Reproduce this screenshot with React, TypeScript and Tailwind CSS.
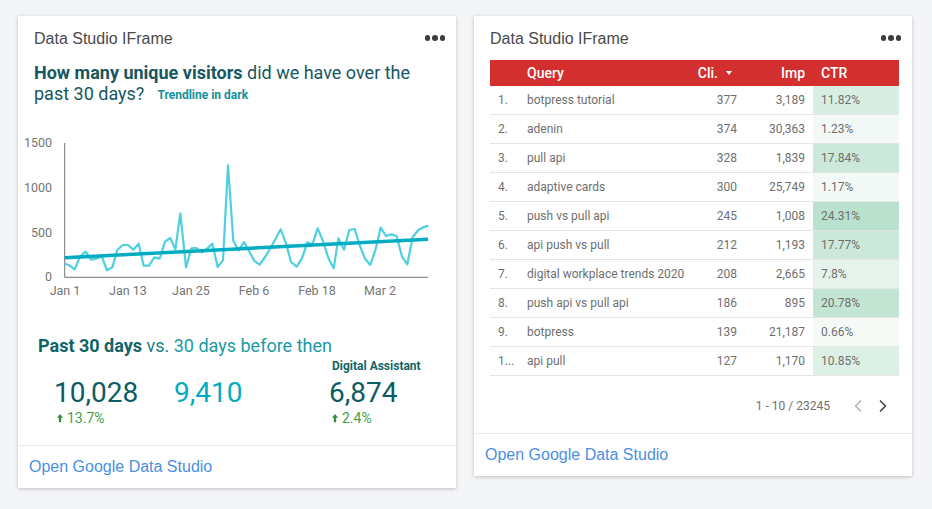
import { ChevronLeft, ChevronRight } from "lucide-react";

const roboto = "font-['Roboto',sans-serif]";

const series = [
  [164, 413], [178, 418], [194, 430], [210, 392], [227, 377], [243, 401], [259, 398], [275, 390], [291, 433], [307, 424],
  [322, 372], [338, 357], [354, 357], [370, 371], [386, 353], [401, 419], [417, 419], [433, 394], [449, 398], [465, 347],
  [481, 336], [496, 371], [511, 262], [528, 424], [544, 367], [560, 366], [576, 379], [592, 367], [607, 353], [623, 423],
  [639, 403], [654, 118], [670, 345], [686, 373], [702, 348], [717, 375], [733, 405], [749, 416], [765, 393], [781, 367],
  [797, 338], [812, 310], [828, 352], [843, 408], [860, 422], [876, 397], [892, 349], [907, 356], [923, 307], [939, 345],
  [955, 396], [971, 427], [985, 337], [1002, 371], [1018, 312], [1034, 309], [1050, 360], [1065, 398], [1081, 417], [1097, 369],
  [1112, 305], [1128, 330], [1144, 325], [1160, 330], [1176, 392], [1192, 415], [1208, 333], [1225, 312], [1240, 304], [1255, 299],
];

const rows = [
  { n: "1.", q: "botpress tutorial", c: "377", i: "3,189", ctr: "11.82%", bg: "bg-[#d9eee3]" },
  { n: "2.", q: "adenin", c: "374", i: "30,363", ctr: "1.23%", bg: "bg-[#f3f9f6]" },
  { n: "3.", q: "pull api", c: "328", i: "1,839", ctr: "17.84%", bg: "bg-[#cbe8da]" },
  { n: "4.", q: "adaptive cards", c: "300", i: "25,749", ctr: "1.17%", bg: "bg-[#f3f9f6]" },
  { n: "5.", q: "push vs pull api", c: "245", i: "1,008", ctr: "24.31%", bg: "bg-[#bae1cd]" },
  { n: "6.", q: "api push vs pull", c: "212", i: "1,193", ctr: "17.77%", bg: "bg-[#cbe8da]" },
  { n: "7.", q: "digital workplace trends 2020", c: "208", i: "2,665", ctr: "7.8%", bg: "bg-[#e5f3ec]" },
  { n: "8.", q: "push api vs pull api", c: "186", i: "895", ctr: "20.78%", bg: "bg-[#c3e5d4]" },
  { n: "9.", q: "botpress", c: "139", i: "21,187", ctr: "0.66%", bg: "bg-[#f5faf7]" },
  { n: "1...", q: "api pull", c: "127", i: "1,170", ctr: "10.85%", bg: "bg-[#dcf0e6]" },
];

function CardHeader() {
  return (
    <div className="flex h-[44px] items-center justify-between pl-4 pr-[11px]">
      <span className="pt-[2px] font-['Liberation_Sans',sans-serif] text-[16px] text-[#4a4a4a]">Data Studio IFrame</span>
      <div className="flex gap-[2px]">
        <span className="size-[5.5px] rounded-full bg-[#3d3d3d]" />
        <span className="size-[5.5px] rounded-full bg-[#3d3d3d]" />
        <span className="size-[5.5px] rounded-full bg-[#3d3d3d]" />
      </div>
    </div>
  );
}

function CardFooter() {
  return (
    <div className="flex h-[43px] items-center border-t border-[#e8e8e8] pl-[11px]">
      <a className="font-['Liberation_Sans',sans-serif] text-[16px] text-[#4a90e2]">Open Google Data Studio</a>
    </div>
  );
}

function Chart() {
  const labels = [
    ["Jan 1", 65],
    ["Jan 13", 128],
    ["Jan 25", 191],
    ["Feb 6", 254],
    ["Feb 18", 317],
    ["Mar 2", 380],
  ] as const;
  return (
    <svg viewBox="0 0 438 180" className={`block h-[180px] w-[438px] ${roboto}`}>
      <g fill="#757575" fontSize="12.5" textAnchor="end">
        <text x="34" y="20">1500</text>
        <text x="34" y="65">1000</text>
        <text x="34" y="110">500</text>
        <text x="34" y="154">0</text>
      </g>
      <path d="M46.7 16V150.3H410" fill="none" stroke="#757575" strokeWidth="1" />
      <polyline
        points={series.map(([x, y]) => `${x / 3 - 8},${y / 3 - 1}`).join(" ")}
        fill="none"
        stroke="#4dd0e1"
        strokeWidth="2.2"
        strokeLinejoin="round"
      />
      <line x1="46.7" y1="130.7" x2="410" y2="112.3" stroke="#00acc1" strokeWidth="3.5" />
      <g fill="#757575" fontSize="12.5" textAnchor="middle">
        {labels.map(([t, x]) => (
          <text key={t} x={x - 18} y="167.5">{t}</text>
        ))}
      </g>
    </svg>
  );
}

function Delta({ value }: { value: string }) {
  return (
    <div className="mt-[1px] flex items-center gap-[4px] pl-[3px] text-[14px] leading-[16px] text-[#43a047]">
      <svg viewBox="0 0 8 11" className="h-[10px] w-[6px]" fill="#388e3c">
        <path d="M4 0 8 5H5.6V11H2.4V5H0Z" />
      </svg>
      {value}
    </div>
  );
}

export default function App() {
  return (
    <div className={`flex min-h-[509px] items-start gap-[18px] bg-[#f4f5f7] px-[18px] pt-4 ${roboto}`}>
      <div className="w-[438px] bg-white shadow-[0_1px_4px_rgba(0,0,0,0.22)]">
        <CardHeader />
        <div className="h-[385px]">
          <div className="pl-4 pr-4 pt-[2px] text-[18px] leading-[21px] whitespace-nowrap text-[#17575f]">
            <b className="font-bold">How many unique visitors</b> did we have over the
            <br />
            past 30 days?
            <span className="ml-[13px] text-[12px] font-bold text-[#12919b] align-[1px]">Trendline in dark</span>
          </div>
          <div className="mt-[21px]">
            <Chart />
          </div>
          <div className="mt-[28px] pl-5 text-[18px] leading-[22px] text-[#1a9aa5]">
            <b className="font-bold text-[#0f6468]">Past 30 days</b> <span className="text-[#187f88]">vs.</span> 30 days before then
          </div>
          <div className="mt-[2px] flex pl-[36px]">
            <div className="w-[120px] pt-[18px]">
              <div className="text-[28px] leading-[32px] text-[#0d5c63]">10,028</div>
              <Delta value="13.7%" />
            </div>
            <div className="w-[155px] pt-[18px]">
              <div className="text-[28px] leading-[32px] text-[#00acc1]">9,410</div>
            </div>
            <div>
              <div className="pl-[3px] text-[12px] font-bold leading-[14px] text-[#0f6468]">Digital Assistant</div>
              <div className="mt-[4px] text-[28px] leading-[32px] text-[#0d5c63]">6,874</div>
              <Delta value="2.4%" />
            </div>
          </div>
        </div>
        <CardFooter />
      </div>

      <div className="w-[438px] bg-white shadow-[0_1px_4px_rgba(0,0,0,0.22)]">
        <CardHeader />
        <div className="h-[373px] pl-4 pr-[13px]">
          <div className="grid h-[26px] grid-cols-[37px_minmax(0,1fr)_60px_76px_86px] items-center bg-[#d32f2f] text-[14px] font-medium text-white">
            <span />
            <span>Query</span>
            <span className="flex items-center justify-end gap-[8px] pr-[5px]">
              Cli.
              <span className="h-0 w-0 border-x-[3.5px] border-t-[4px] border-x-transparent border-t-white" />
            </span>
            <span className="pr-2 text-right">Imp</span>
            <span className="pl-2">CTR</span>
          </div>
          {rows.map((r) => (
            <div
              key={r.q}
              className="grid h-[29px] grid-cols-[37px_minmax(0,1fr)_60px_76px_86px] items-center border-b border-[#e6e6e6] text-[12px] whitespace-nowrap text-[#6f6f6f]"
            >
              <span className="pl-2">{r.n}</span>
              <span>{r.q}</span>
              <span className="text-right">{r.c}</span>
              <span className="pr-2 text-right">{r.i}</span>
              <span className={`flex h-full items-center pl-2 ${r.bg}`}>{r.ctr}</span>
            </div>
          ))}
          <div className="mt-[20px] flex items-center justify-end pr-[6px] text-[12px] text-[#6f6f6f]">
            <span className="mr-[18px]">1 - 10 / 23245</span>
            <ChevronLeft className="mr-[5px] size-[20px] text-[#b5b5b5]" />
            <ChevronRight className="size-[20px] text-[#444444]" />
          </div>
        </div>
        <CardFooter />
      </div>
    </div>
  );
}
